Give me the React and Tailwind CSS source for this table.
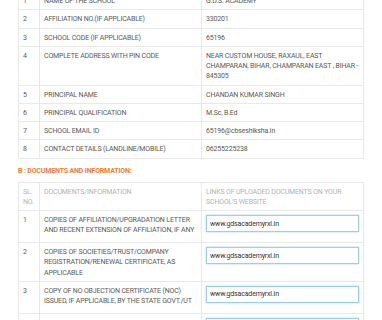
import React from 'react';

const schoolInfo = [
  ['1', 'NAME OF THE SCHOOL', 'G.D.S. ACADEMY'],
  ['2', 'AFFILIATION NO.(IF APPLICABLE)', '330201'],
  ['3', 'SCHOOL CODE (IF APPLICABLE)', '65196'],
  ['4', 'COMPLETE ADDRESS WITH PIN CODE', 'NEAR CUSTOM HOUSE, RAXAUL, EAST CHAMPARAN, BIHAR, CHAMPARAN EAST , BIHAR - 845305'],
  ['5', 'PRINCIPAL NAME', 'CHANDAN KUMAR SINGH'],
  ['6', 'PRINCIPAL QUALIFICATION', 'M.Sc, B.Ed'],
  ['7', 'SCHOOL EMAIL ID', '65196@cbseshiksha.in'],
  ['8', 'CONTACT DETAILS (LANDLINE/MOBILE)', '06255225238'],
];

const documents = [
  ['1', 'COPIES OF AFFILIATION/UPGRADATION LETTER AND RECENT EXTENSION OF AFFILIATION, IF ANY'],
  ['2', 'COPIES OF SOCIETIES/TRUST/COMPANY REGISTRATION/RENEWAL CERTIFICATE, AS APPLICABLE'],
  ['3', 'COPY OF NO OBJECTION CERTIFICATE (NOC) ISSUED, IF APPLICABLE, BY THE STATE GOVT./UT'],
  ['4', 'COPIES OF RECOGNITION CERTIFICATE UNDER RTE ACT, 2009, AND ITS RENEWAL IF APPLICABLE'],
];

const cell = 'border border-[#e9e9e9] align-top px-[4px] pt-[4px] pb-[3px]';

const App = () => {
  return (
    <div className="w-[382px] h-[320px] overflow-hidden bg-white font-['Roboto',sans-serif] text-[7px] tracking-[-0.16px] leading-[10.25px] text-[#5a5a5a]">
      <div className="-mt-[9px] pl-[18px] pr-[19px]">
        {/* A: general information */}
        <table className="w-[345px] border-collapse table-fixed">
          <colgroup>
            <col className="w-[21px]" />
            <col className="w-[162px]" />
            <col className="w-[162px]" />
          </colgroup>
          <tbody>
            {schoolInfo.map(([no, label, value]) => (
              <tr key={no}>
                <td className={cell}>{no}</td>
                <td className={cell}>{label}</td>
                <td className={cell}>{value}</td>
              </tr>
            ))}
          </tbody>
        </table>

        <h4 className="mt-[7px] mb-[6px] text-[#ef7d34] font-bold leading-[10px]">B : DOCUMENTS AND INFORMATION:</h4>

        {/* B: documents */}
        <table className="w-[345px] border-collapse table-fixed">
          <colgroup>
            <col className="w-[21px]" />
            <col className="w-[162px]" />
            <col className="w-[162px]" />
          </colgroup>
          <thead>
            <tr className="text-[#b3b3b3] text-left">
              <th className={`${cell} font-normal`}>SL.<br />NO.</th>
              <th className={`${cell} font-normal`}>DOCUMENTS/INFORMATION</th>
              <th className={`${cell} font-normal`}>LINKS OF UPLOADED DOCUMENTS ON YOUR SCHOOL'S WEBSITE</th>
            </tr>
          </thead>
          <tbody>
            {documents.map(([no, label]) => (
              <tr key={no}>
                <td className={cell}>{no}</td>
                <td className={cell}>{label}</td>
                <td className={cell}>
                  <input
                    readOnly
                    value="www.gdsacademyrxl.in"
                    className="block w-full h-[17px] mb-[7px] px-[3px] border border-[#9fcde6] shadow-[0_0_2px_rgba(102,175,233,0.5)] text-[7px] text-[#333] bg-white outline-none"
                  />
                </td>
              </tr>
            ))}
          </tbody>
        </table>
      </div>
    </div>
  );
};

export default App;
